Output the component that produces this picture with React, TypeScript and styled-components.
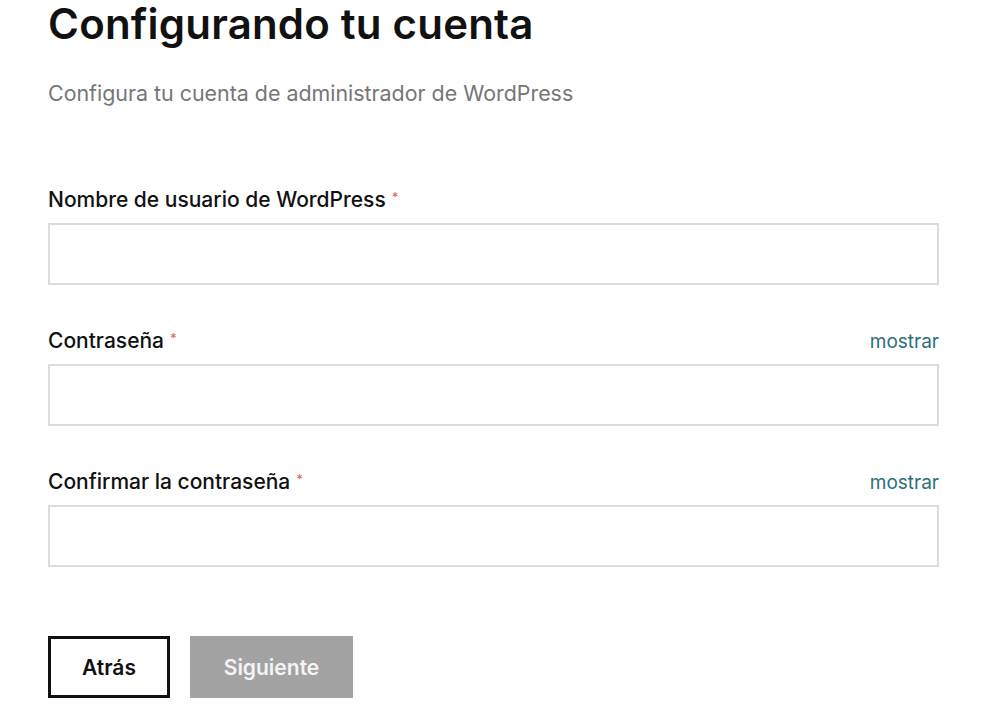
import React from "react";
import styled, { createGlobalStyle } from "styled-components";

const GlobalStyle = createGlobalStyle`
  body {
    margin: 0;
    background: #ffffff;
    font-family: Inter, "Noto Sans", sans-serif;
    color: #111111;
  }
`;

const Page = styled.main`
  width: 891px;
  padding: 0 0 0 48px;
  display: flex;
  flex-direction: column;
`;

const Title = styled.h1`
  margin: 0;
  font-size: 42px;
  line-height: 48px;
  font-weight: 600;
  letter-spacing: 0.2px;
  color: #111111;
`;

const Subtitle = styled.p`
  margin: 32px 0 0;
  font-size: 21.4px;
  line-height: 26px;
  color: #767676;
`;

const Form = styled.form`
  margin-top: 81px;
  display: flex;
  flex-direction: column;
  gap: 43px;
`;

const Field = styled.div`
  display: flex;
  flex-direction: column;
`;

const LabelRow = styled.div`
  display: flex;
  justify-content: space-between;
  align-items: baseline;
  height: 26px;
  margin-bottom: 10px;
`;

const Label = styled.label`
  font-size: 21px;
  font-weight: 500;
  color: #111111;
`;

const Required = styled.span`
  color: #d9705a;
  font-size: 13px;
  margin-left: 6px;
  vertical-align: 5px;
`;

const Toggle = styled.button`
  border: none;
  background: none;
  padding: 0;
  font-family: inherit;
  font-size: 19px;
  color: #2b6f7a;
  cursor: pointer;
`;

const Input = styled.input`
  box-sizing: border-box;
  width: 100%;
  height: 62px;
  border: 2px solid #dcdcdc;
  border-radius: 0;
  padding: 0 16px;
  font-size: 18px;
  font-family: inherit;
  outline: none;
`;

const Actions = styled.div`
  margin-top: 69px;
  display: flex;
  gap: 20px;
`;

const Button = styled.button<{ $primary?: boolean }>`
  box-sizing: border-box;
  height: 62px;
  padding: 0;
  font-family: inherit;
  font-size: 21px;
  font-weight: 600;
  border-radius: 0;
  border: ${({ $primary }) => ($primary ? "none" : "3px solid #111111")};
  background: ${({ $primary }) => ($primary ? "#a3a3a3" : "#ffffff")};
  color: ${({ $primary }) => ($primary ? "#f4f4f4" : "#111111")};
  width: ${({ $primary }) => ($primary ? "163px" : "122px")};
`;

const fields = [
  { id: "user", label: "Nombre de usuario de WordPress", toggle: false },
  { id: "pass", label: "Contraseña", toggle: true },
  { id: "confirm", label: "Confirmar la contraseña", toggle: true },
];

export default function App() {
  return (
    <>
      <GlobalStyle />
      <Page>
        <Title>Configurando tu cuenta</Title>
        <Subtitle>Configura tu cuenta de administrador de WordPress</Subtitle>
        <Form onSubmit={(e) => e.preventDefault()}>
          {fields.map((f) => (
            <Field key={f.id}>
              <LabelRow>
                <Label htmlFor={f.id}>
                  {f.label}
                  <Required>*</Required>
                </Label>
                {f.toggle && <Toggle type="button">mostrar</Toggle>}
              </LabelRow>
              <Input id={f.id} type={f.toggle ? "password" : "text"} />
            </Field>
          ))}
        </Form>
        <Actions>
          <Button type="button">Atrás</Button>
          <Button type="button" $primary disabled>
            Siguiente
          </Button>
        </Actions>
      </Page>
    </>
  );
}
